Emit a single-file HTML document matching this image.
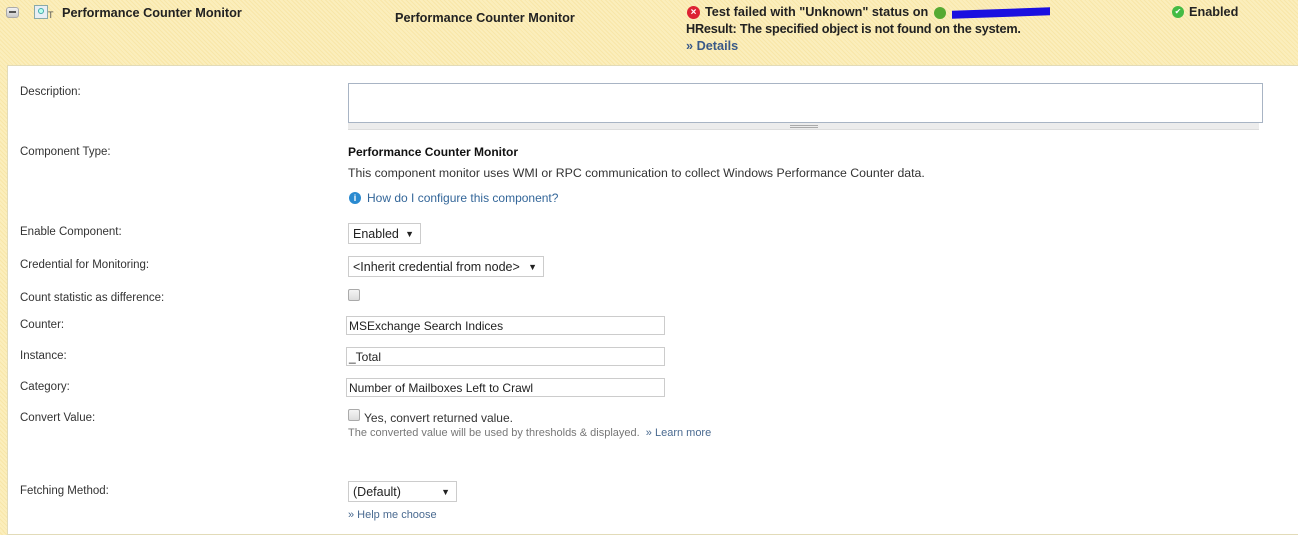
<!DOCTYPE html>
<html><head><meta charset="utf-8"><style>
*{margin:0;padding:0;box-sizing:border-box}
body{width:1298px;height:531px;overflow:hidden;font-family:"Liberation Sans",sans-serif;color:#333;position:relative;
background:repeating-linear-gradient(45deg,#fbeebc 0,#fbeebc 2px,#f8e6a8 2px,#f8e6a8 3px);}
.a{position:absolute;white-space:nowrap}
.b{font-weight:bold;font-size:12.7px;color:#222}
.panel{position:absolute;left:7px;top:65px;width:1291px;height:470px;background:#fff;border:1px solid #e2dbb8;border-right:none}
.l{font-size:11.5px;color:#333;left:20px}
.in{position:absolute;border:1px solid #ccc;background:#fff;font-size:12px;color:#222;padding:0 0 0 2px;line-height:18px}
.sel{position:absolute;border:1px solid #ccc;background:#fff;font-size:12.5px;color:#222;padding-left:4px;line-height:20px}
.sel span{position:absolute;right:6px;top:0;font-size:9px}
.cb{position:absolute;width:12px;height:12px;border:1px solid #aaa;border-radius:2px;background:linear-gradient(#f4f4f4,#ddd)}
.link{color:#336699}
</style></head><body>
<div class="a" style="left:6px;top:7px;width:13px;height:11px;border-radius:3px;background:linear-gradient(#f2f2f2,#c8c8c8);border:1px solid #aaa"></div>
<div class="a" style="left:9px;top:11px;width:7px;height:2px;background:#555"></div>
<div class="a" style="left:34px;top:5px;width:14px;height:14px;border:1px solid #8aa;background:#e8eef4"></div>
<div class="a" style="left:38px;top:8px;width:6px;height:6px;border-radius:50%;border:1px solid #4aa;background:#bfe"></div>
<div class="a" style="left:48px;top:10px;font-size:9px;color:#555">T</div>
<div class="a b" style="left:62px;top:6px">Performance Counter Monitor</div>
<div class="a b" style="left:395px;top:11px">Performance Counter Monitor</div>
<div class="a" style="left:687px;top:6px;width:13px;height:13px;border-radius:50%;background:#d23;color:#fff;font-size:10px;line-height:13px;text-align:center;font-weight:bold">×</div>
<div class="a b" style="left:705px;top:5px">Test failed with "Unknown" status on</div>
<div class="a" style="left:934px;top:7px;width:12px;height:12px;border-radius:50%;background:#5a3"></div>
<div class="a" style="left:952px;top:9px;width:98px;height:8px;background:#1a10e0;transform:skewY(-2deg)"></div>
<div class="a b" style="left:686px;top:22px;letter-spacing:-0.2px">HResult: The specified object is not found on the system.</div>
<div class="a b" style="left:686px;top:39px;color:#3a5a88">» Details</div>
<div class="a" style="left:1172px;top:6px;width:12px;height:12px;border-radius:50%;background:#4b4;color:#fff;font-size:8px;line-height:12px;text-align:center">✔</div>
<div class="a b" style="left:1189px;top:5px">Enabled</div>
<div class="panel"></div>
<div class="a l" style="top:86px">Description:</div>
<div class="a" style="left:348px;top:83px;width:915px;height:40px;border:1px solid #a8b4c4;background:#fff"></div>
<div class="a" style="left:348px;top:123px;width:911px;height:7px;background:#ececec;border-bottom:1px solid #ddd"></div>
<div class="a" style="left:790px;top:125px;width:28px;height:3px;border-top:1px solid #aaa;border-bottom:1px solid #aaa"></div>
<div class="a l" style="top:146px">Component Type:</div>
<div class="a" style="left:348px;top:145px;font-size:12px;font-weight:bold;color:#111">Performance Counter Monitor</div>
<div class="a" style="left:348px;top:166px;font-size:12.3px;color:#333">This component monitor uses WMI or RPC communication to collect Windows Performance Counter data.</div>
<div class="a" style="left:349px;top:192px;width:12px;height:12px;border-radius:50%;background:#2a8ad0;color:#fff;font-size:9px;line-height:12px;text-align:center;font-weight:bold">i</div>
<div class="a link" style="left:367px;top:191px;font-size:12px">How do I configure this component?</div>
<div class="a l" style="top:226px">Enable Component:</div>
<div class="sel" style="left:348px;top:223px;width:73px;height:21px">Enabled<span>▼</span></div>
<div class="a l" style="top:259px">Credential for Monitoring:</div>
<div class="sel" style="left:348px;top:256px;width:196px;height:21px">&lt;Inherit credential from node&gt;<span>▼</span></div>
<div class="a l" style="top:292px">Count statistic as difference:</div>
<div class="cb" style="left:348px;top:289px"></div>
<div class="a l" style="top:319px">Counter:</div>
<div class="in" style="left:346px;top:316px;width:319px;height:19px">MSExchange Search Indices</div>
<div class="a l" style="top:350px">Instance:</div>
<div class="in" style="left:346px;top:347px;width:319px;height:19px">_Total</div>
<div class="a l" style="top:381px">Category:</div>
<div class="in" style="left:346px;top:378px;width:319px;height:19px">Number of Mailboxes Left to Crawl</div>
<div class="a l" style="top:412px">Convert Value:</div>
<div class="cb" style="left:348px;top:409px"></div>
<div class="a" style="left:364px;top:411px;font-size:12px;color:#333">Yes, convert returned value.</div>
<div class="a" style="left:348px;top:427px;font-size:11px;color:#777">The converted value will be used by thresholds &amp; displayed. <span class="link" style="color:#4a6a90">&nbsp;» Learn more</span></div>
<div class="a l" style="top:485px">Fetching Method:</div>
<div class="sel" style="left:348px;top:481px;width:109px;height:21px">(Default)<span>▼</span></div>
<div class="a" style="left:348px;top:509px;font-size:11px;color:#4a6a90">» Help me choose</div>
</body></html>
